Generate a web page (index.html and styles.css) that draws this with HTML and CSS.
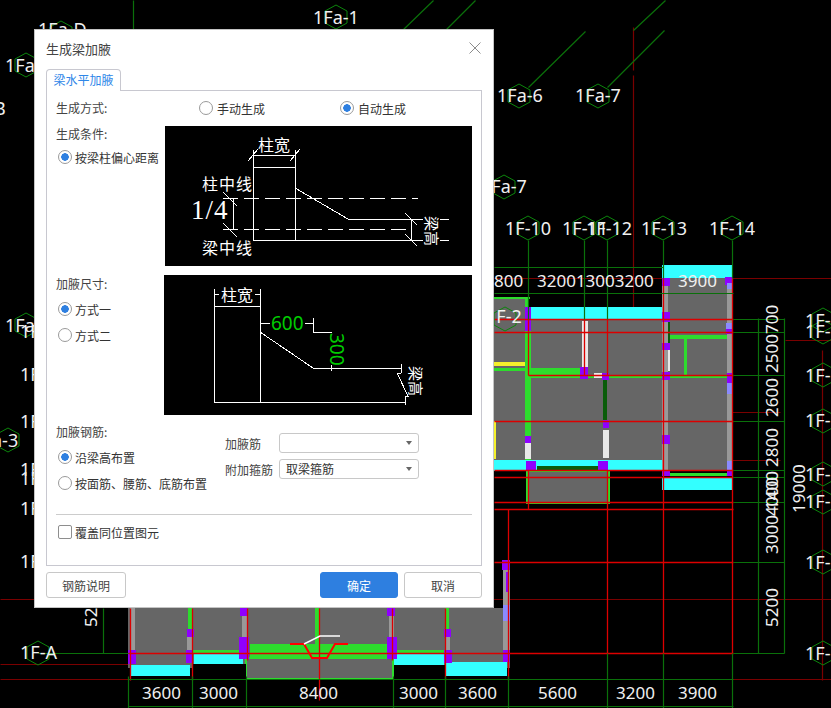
FILE: index.html
```html
<!DOCTYPE html>
<html lang="zh-CN">

<head>
    <meta charset="UTF-8">
    <title>生成梁加腋</title>
    <link rel="stylesheet" href="styles.css">
</head>

<body>
    <!-- cad drawing behind the dialog -->
    <svg class="cad" width="831" height="708" viewBox="0 0 831 708">
        <defs>
            <polygon id="hex" points="0,-12 11,-6 11,6 0,12 -11,6 -11,-6" fill="none" stroke="#0c860c" />
        </defs>

        <!-- dark red axis lines -->
        <g class="axis-dark">
            <path d="M0 599H831M0 664H128M0 679H128M494 278H831M494 460H780M633 27V70M633 75V375M684 412H780M785 340H831M730 679H831M822 350V680" />
        </g>

        <!-- floor slabs -->
        <g>
            <rect x="662" y="265" width="71" height="14" fill="#33ffff" />
            <rect x="662" y="278" width="71" height="192" fill="#666" />
            <rect x="662" y="477" width="71" height="13" fill="#33ffff" />
            <rect x="494" y="298" width="35" height="162" fill="#666" />
            <rect x="530" y="307" width="132" height="13" fill="#33ffff" />
            <rect x="529" y="320" width="133" height="140" fill="#666" />
            <rect x="494" y="460" width="168" height="11" fill="#33ffff" />
            <rect x="527" y="471" width="82" height="32" fill="#666" stroke="#2ddc2d" stroke-width="2" />
            <rect x="128" y="608" width="382" height="60" fill="#666" />
            <rect x="131" y="665" width="59" height="11" fill="#33ffff" />
            <rect x="194" y="654" width="49" height="10" fill="#33ffff" />
            <rect x="394" y="654" width="50" height="11" fill="#33ffff" />
            <rect x="446" y="662" width="61" height="14" fill="#33ffff" />
            <rect x="246" y="658" width="147" height="21" fill="#666" stroke="#2ddc2d" stroke-width="2" />
            <rect x="193" y="664" width="53" height="16" fill="#000" />
            <rect x="394" y="665" width="51" height="15" fill="#000" />
            <rect x="250" y="644" width="137" height="14" fill="#2ddc2d" />
            <rect x="193" y="650" width="50" height="4" fill="#2ddc2d" />
            <rect x="394" y="650" width="50" height="4" fill="#2ddc2d" />
        </g>

        <!-- beams -->
        <g fill="#2ddc2d">
            <rect x="529" y="368" width="52" height="7" />
            <rect x="529" y="375" width="201" height="3" />
            <rect x="528" y="320" width="3" height="140" />
            <rect x="668" y="335" width="59" height="4" />
            <rect x="684" y="338" width="3" height="37" />
            <rect x="663" y="378" width="3" height="92" />
            <rect x="494" y="297" width="36" height="2" />
            <rect x="494" y="368" width="34" height="3" />
            <rect x="525" y="298" width="3" height="162" />
            <rect x="188" y="608" width="4" height="26" />
            <rect x="315" y="608" width="4" height="36" />
            <rect x="445" y="608" width="4" height="40" />
            <rect x="662" y="473" width="71" height="3" />
        </g>
        <g fill="#0a5c0a">
            <rect x="603" y="378" width="4" height="42" />
            <rect x="663" y="320" width="7" height="24" />
            <rect x="727" y="340" width="5" height="34" />
            <rect x="537" y="466" width="62" height="4" />
        </g>
        <g fill="#e8e8e8">
            <rect x="582" y="321" width="6" height="46" />
            <rect x="594" y="373" width="10" height="5" />
            <rect x="603" y="430" width="6" height="28" />
            <rect x="525" y="442" width="6" height="17" />
            <rect x="663" y="349" width="7" height="22" />
        </g>
        <rect x="494" y="362" width="31" height="4" fill="#f5f02c" />
        <rect x="494" y="421" width="2" height="38" fill="#f5f02c" />
        <g fill="#999">
            <rect x="662" y="285" width="6" height="185" />
            <rect x="727" y="285" width="6" height="185" />
            <rect x="130" y="608" width="5" height="52" />
            <rect x="187" y="634" width="5" height="22" />
            <rect x="242" y="610" width="5" height="38" />
            <rect x="389" y="610" width="5" height="38" />
            <rect x="445" y="634" width="5" height="22" />
            <rect x="503" y="565" width="7" height="95" />
        </g>
        <g fill="#8f00ff">
            <rect x="662" y="278" width="8" height="8" />
            <rect x="725" y="277" width="8" height="8" />
            <rect x="662" y="312" width="8" height="10" />
            <rect x="662" y="343" width="8" height="7" />
            <rect x="662" y="372" width="8" height="8" />
            <rect x="662" y="435" width="8" height="9" />
            <rect x="662" y="470" width="8" height="6" />
            <rect x="726" y="328" width="7" height="6" />
            <rect x="727" y="373" width="6" height="10" />
            <rect x="727" y="470" width="6" height="6" />
            <rect x="525" y="307" width="6" height="24" />
            <rect x="580" y="367" width="8" height="12" />
            <rect x="602" y="373" width="7" height="7" />
            <rect x="603" y="420" width="6" height="8" />
            <rect x="525" y="436" width="6" height="7" />
            <rect x="526" y="461" width="10" height="10" />
            <rect x="598" y="461" width="10" height="10" />
            <rect x="128" y="650" width="8" height="14" />
            <rect x="187" y="629" width="7" height="8" />
            <rect x="186" y="650" width="7" height="13" />
            <rect x="239" y="637" width="10" height="22" />
            <rect x="240" y="608" width="8" height="8" />
            <rect x="387" y="637" width="10" height="22" />
            <rect x="387" y="608" width="8" height="8" />
            <rect x="444" y="629" width="7" height="8" />
            <rect x="444" y="650" width="8" height="13" />
            <rect x="503" y="650" width="7" height="12" />
            <rect x="502" y="560" width="8" height="10" />
            <rect x="506" y="572" width="2" height="20" />
        </g>
        <g fill="#8a8aff">
            <rect x="727" y="283" width="6" height="6" />
            <rect x="726" y="323" width="7" height="6" />
            <rect x="727" y="383" width="6" height="11" />
            <rect x="727" y="461" width="6" height="9" />
            <rect x="503" y="605" width="7" height="16" />
        </g>

        <!-- bright red axis lines -->
        <g class="axis-red">
            <path d="M494 319H733M494 332H733M528 375H733M494 421H733M494 470H733M494 477H733M494 502H733M494 509H733M494 562H733M128 653H733" />
            <path d="M508 509V653M528 319V375M528 470V509M584 319V375M607 319V375M607 470V653M663 278V653M732 278V653M130 608V680M192 608V680M247 608V660M319 608V700M392 608V660M445 608V680M508 608V680" />
        </g>

        <!-- green dimension lines -->
        <g class="dim">
            <path d="M133 0V29M402 30L433 0M445 30L475 0M528 87L585 31M607 87L664 30M633 30L665 0" />
            <path d="M494 267H663M494 293H733M733 319H784M733 332H784M733 375H784M733 421H784M733 470H784M733 477H784M733 502H784M733 562H784M733 653H784M758 318V653M784 318V653M38 653H128M103 608V653" />
            <path d="M528 240V319M584 240V319M607 240V319M663 240V278M732 240V278M128 679H733M128 706H733M128 676V708M192 676V708M246 676V708M393 676V708M445 676V708M508 676V708M607 653V708M663 653V708M732 653V708" />
        </g>

        <!-- axis bubbles -->
        <use href="#hex" x="336" y="17" />
        <use href="#hex" x="61" y="33" />
        <use href="#hex" x="26" y="65" />
        <use href="#hex" x="519" y="96" />
        <use href="#hex" x="598" y="96" />
        <use href="#hex" x="504" y="187" />
        <use href="#hex" x="528" y="228" />
        <use href="#hex" x="584" y="228" />
        <use href="#hex" x="607" y="228" />
        <use href="#hex" x="663" y="228" />
        <use href="#hex" x="732" y="228" />
        <use href="#hex" x="505" y="319" />
        <use href="#hex" x="823" y="320" />
        <use href="#hex" x="823" y="332" />
        <use href="#hex" x="823" y="375" />
        <use href="#hex" x="823" y="421" />
        <use href="#hex" x="823" y="474" />
        <use href="#hex" x="823" y="502" />
        <use href="#hex" x="823" y="562" />
        <use href="#hex" x="823" y="653" />
        <use href="#hex" x="38" y="653" />
        <use href="#hex" x="26" y="325" />
        <use href="#hex" x="8" y="440" />

        <!-- red section mark -->
        <path d="M290 644H304L312 658H327L335 644H348" fill="none" stroke="#f00" stroke-width="2" />
        <path d="M304 644L320 636H340" fill="none" stroke="#fff" stroke-width="1.5" />

        <g class="cad-text">
            <text x="313" y="24">1Fa-1</text>
            <text x="38" y="36">1Fa-D</text>
            <text x="5" y="72">1Fa</text>
            <text x="-6" y="115">B</text>
            <text x="497" y="102">1Fa-6</text>
            <text x="575" y="102">1Fa-7</text>
            <text x="481" y="193">1Fa-7</text>
            <text x="505" y="235">1F-10</text>
            <text x="562" y="235">1F-11</text>
            <text x="586" y="235">1F-12</text>
            <text x="641" y="235">1F-13</text>
            <text x="709" y="235">1F-14</text>
            <text x="486" y="323">1F-2</text>
            <text x="5" y="332">1Fa</text>
            <text x="20" y="338">1F</text>
            <text x="20" y="381">1F</text>
            <text x="20" y="428">1F</text>
            <text x="-8" y="447">a-3</text>
            <text x="20" y="476">1F</text>
            <text x="20" y="485">1F</text>
            <text x="20" y="515">1F</text>
            <text x="20" y="568">1F</text>
            <text x="20" y="659">1F-A</text>
            <text x="805" y="327">1F-</text>
            <text x="805" y="338">1F-</text>
            <text x="805" y="382">1F-</text>
            <text x="805" y="427">1F-</text>
            <text x="805" y="481">1F-</text>
            <text x="805" y="508">1F-</text>
            <text x="805" y="569">1F-</text>
            <text x="805" y="660">1F-</text>
        </g>
        <g class="cad-text dim-text">
            <text x="494" y="287">800</text>
            <text x="537" y="287">320013003200</text>
            <text x="678" y="287">3900</text>
            <text x="142" y="699">3600</text>
            <text x="199" y="699">3000</text>
            <text x="299" y="699">8400</text>
            <text x="399" y="699">3000</text>
            <text x="458" y="699">3600</text>
            <text x="538" y="699">5600</text>
            <text x="616" y="699">3200</text>
            <text x="678" y="699">3900</text>
            <text transform="translate(778 627) rotate(-90)">5200</text>
            <text transform="translate(778 554) rotate(-90)">3000</text>
            <text transform="translate(778 516) rotate(-90)">4000</text>
            <text transform="translate(778 510) rotate(-90)">1400</text>
            <text transform="translate(778 467) rotate(-90)">2800</text>
            <text transform="translate(778 417) rotate(-90)">2600</text>
            <text transform="translate(778 373) rotate(-90)">2500</text>
            <text transform="translate(778 334) rotate(-90)">700</text>
            <text transform="translate(805 513) rotate(-90)">19000</text>
            <text transform="translate(97 627) rotate(-90)">5200</text>
        </g>
    </svg>

    <div class="dialog">
        <div class="dialog-head">
            <span class="dialog-title">生成梁加腋</span>
            <svg class="close" width="12" height="12" viewBox="0 0 12 12">
                <path d="M.5 .5L11.5 11.5M11.5 .5L.5 11.5" />
            </svg>
        </div>

        <div class="tabs">
            <div class="tab">梁水平加腋</div>
        </div>

        <div class="panel">
            <div class="row-mode">
                <div class="label label-mode">生成方式:</div>
                <label class="radio radio-manual"><i></i>手动生成</label>
                <label class="radio on"><i></i>自动生成</label>
            </div>

            <div class="row-figure row-cond">
                <div class="side">
                    <div class="label">生成条件:</div>
                    <label class="radio on"><i></i>按梁柱偏心距离</label>
                </div>
                <svg class="figure" width="307" height="140" viewBox="0 0 307 140">
                    <g class="fig-line">
                        <path d="M88 24V114M130 24V114M88 29H130M88 41H130M88 114H258M130 62L183 93H258" />
                        <path d="M83 35L93 23M125 35L135 23M68 72V103M58 66L72 80M58 97L72 111M246 93V114M240 87L252 99M240 108L252 120" />
                        <path d="M275 93H284M275 114H284" />
                        <path class="dash" d="M58 72H253M58 103H245" />
                    </g>
                    <text class="fig-cn" x="93" y="25">柱宽</text>
                    <text class="fig-cn wide" x="37" y="64">柱中线</text>
                    <text class="fig-cn wide" x="37" y="128">梁中线</text>
                    <text class="fig-frac" x="26" y="93">1/4</text>
                    <text class="fig-cn small" transform="translate(261 90) rotate(90)">梁高</text>
                </svg>
            </div>

            <div class="row-figure row-size">
                <div class="side">
                    <div class="label">加腋尺寸:</div>
                    <label class="radio on"><i></i>方式一</label>
                    <label class="radio"><i></i>方式二</label>
                </div>
                <svg class="figure" width="308" height="140" viewBox="0 0 308 140">
                    <g class="fig-line">
                        <path d="M50 14V127M96 14V127M50 31H96M50 127H241M96 57L149 93H237V89M237 98V93M237 98H233L244 121H241V130" />
                        <path d="M50 19H55M91 19H96M96 48H106M141 48H149M149 43V57H168M167 90V96" />
                    </g>
                    <text class="fig-cn" x="57" y="26">柱宽</text>
                    <text class="fig-num" x="107" y="55">600</text>
                    <text class="fig-num" transform="translate(166 58) rotate(90)">300</text>
                    <text class="fig-cn small" transform="translate(246 91) rotate(90)">梁高</text>
                </svg>
            </div>

            <div class="row-rebar">
                <div class="side">
                    <div class="label">加腋钢筋:</div>
                    <label class="radio on"><i></i>沿梁高布置</label>
                    <label class="radio"><i></i>按面筋、腰筋、底筋布置</label>
                </div>
                <div class="fields">
                    <div class="field">
                        <span>加腋筋</span>
                        <div class="select"></div>
                    </div>
                    <div class="field">
                        <span>附加箍筋</span>
                        <div class="select">取梁箍筋</div>
                    </div>
                </div>
            </div>

            <div class="row-cover">
                <label class="check"><i></i>覆盖同位置图元</label>
            </div>
        </div>

        <div class="foot">
            <button class="btn btn-note">钢筋说明</button>
            <button class="btn btn-ok">确定</button>
            <button class="btn">取消</button>
        </div>
    </div>
</body>

</html>
```

FILE: styles.css
```css
* {
    box-sizing: border-box;
}

html,
body {
    margin: 0;
    height: 708px;
    overflow: hidden;
    background-color: #000;
}

body {
    position: relative;
    font-family: "Noto Sans CJK SC", "Noto Sans", sans-serif;
    font-size: 12px;
    color: #333;
}

.cad {
    position: absolute;
    left: 0;
    top: 0;
    display: block;
}

.fig-line path {
    shape-rendering: crispEdges;
}

/* half pixel shift keeps the 1px lines on one row */
.axis-dark,
.axis-red,
.dim {
    transform: translate(.5px, .5px);
}

.axis-dark path {
    fill: none;
    stroke: #7a0000;
    stroke-width: 1.2;
}

.axis-red path {
    fill: none;
    stroke: #dc0000;
    stroke-width: 1.3;
}

.dim path {
    fill: none;
    stroke: #0a700a;
    stroke-width: 1.2;
}

.cad-text text {
    font-family: "Noto Sans", sans-serif;
    font-size: 18px;
    fill: #f0f0f0;
}

.dim-text text {
    font-size: 17px;
}

/* dialog */
.dialog {
    position: absolute;
    left: 34px;
    top: 29px;
    width: 460px;
    height: 579px;
    padding: 0 11px;
    background-color: #fff;
    border: 1px solid #c4c4c4;
}

.dialog-head {
    display: flex;
    justify-content: space-between;
    align-items: center;
    height: 38px;
    padding-bottom: 2px;
}

.dialog-title {
    font-size: 13px;
    color: #444;
}

.close {
    margin-right: 1px;
}

.close path {
    fill: none;
    stroke: #8c8c8c;
}

.tabs {
    display: flex;
    height: 22px;
    margin-top: 1px;
}

.tab {
    width: 75px;
    height: 22px;
    line-height: 20px;
    text-align: center;
    color: #2e86e8;
    background-color: #fff;
    border: 1px solid #c8c8d0;
    border-bottom: none;
    border-radius: 4px 4px 0 0;
    position: relative;
    z-index: 1;
}

.panel {
    height: 476px;
    margin-top: -1px;
    padding: 0 9px;
    border: 1px solid #c8c8d0;
}

.label {
    height: 20px;
    line-height: 20px;
    color: #444;
}

.row-mode {
    display: flex;
    align-items: center;
    height: 35px;
    padding-bottom: 1px;
}

.label-mode {
    width: 143px;
}

.radio-manual {
    width: 141px;
}

.radio {
    display: flex;
    align-items: center;
    height: 26px;
    padding-left: 2px;
    white-space: nowrap;
}

.row-mode .radio {
    padding-left: 0;
}

.radio i {
    flex: none;
    width: 14px;
    height: 14px;
    margin-right: 3px;
    border: 1px solid #9a9a9a;
    border-radius: 50%;
    background-color: #fff;
}

.row-mode .radio i {
    margin-right: 4px;
}

.radio.on i {
    background: radial-gradient(circle, #2e7fe0 0 3.5px, #fff 4px);
}

.row-figure {
    display: flex;
    align-items: flex-start;
}

.side {
    width: 109px;
    flex: none;
}

.row-cond {
    height: 149px;
}

.row-cond .side .label {
    margin-top: -2px;
}

.row-size {
    height: 147px;
}

.row-size .figure {
    margin-left: -1px;
}

.row-size .side .label {
    margin-top: -1px;
    margin-bottom: 2px;
}

.figure {
    display: block;
    flex: none;
    background-color: #000;
}

.fig-line path {
    fill: none;
    stroke: #fff;
}

.fig-line .dash {
    stroke-dasharray: 15 6;
}

.fig-cn {
    font-family: "Noto Sans CJK SC", sans-serif;
    font-size: 16px;
    fill: #fff;
}

.fig-cn.wide {
    letter-spacing: 1px;
}

.fig-cn.small {
    font-size: 15px;
}

.fig-frac {
    font-family: "Liberation Serif", serif;
    font-size: 27px;
    letter-spacing: 1px;
    fill: #fff;
}

.fig-num {
    font-family: "Noto Sans", sans-serif;
    font-size: 19px;
    fill: #0c0;
}

.row-rebar {
    display: flex;
    height: 92px;
}

.row-rebar .side {
    width: 169px;
}

.row-rebar .side .label {
    margin-bottom: 2px;
}

.fields {
    display: flex;
    flex-direction: column;
    gap: 6px;
    padding-top: 11px;
}

.field {
    display: flex;
    align-items: center;
    height: 20px;
}

.field span {
    width: 54px;
    color: #444;
}

.select {
    position: relative;
    width: 140px;
    height: 20px;
    line-height: 18px;
    padding-left: 6px;
    border: 1px solid #c8c8c8;
    border-radius: 3px;
}

.select::after {
    content: "";
    position: absolute;
    right: 6px;
    top: 7px;
    border: 3px solid transparent;
    border-top: 4px solid #666;
    border-bottom: none;
}

.row-cover {
    padding-top: 10px;
    border-top: 1px solid #ccc;
}

.check {
    display: flex;
    align-items: center;
    height: 14px;
    padding-left: 2px;
}

.check i {
    flex: none;
    width: 14px;
    height: 14px;
    margin-right: 3px;
    border: 1px solid #8e8e8e;
    border-radius: 2px;
}

.foot {
    display: flex;
    gap: 6px;
    margin-top: 6px;
}

.btn {
    width: 78px;
    height: 26px;
    padding: 0;
    font: inherit;
    color: #444;
    background-color: #fff;
    border: 1px solid #c8c8c8;
    border-radius: 3px;
}

.btn-note {
    width: 80px;
    margin-right: auto;
}

.btn-ok {
    color: #fff;
    background-color: #2e7fe0;
    border-color: #2e7fe0;
}
```
